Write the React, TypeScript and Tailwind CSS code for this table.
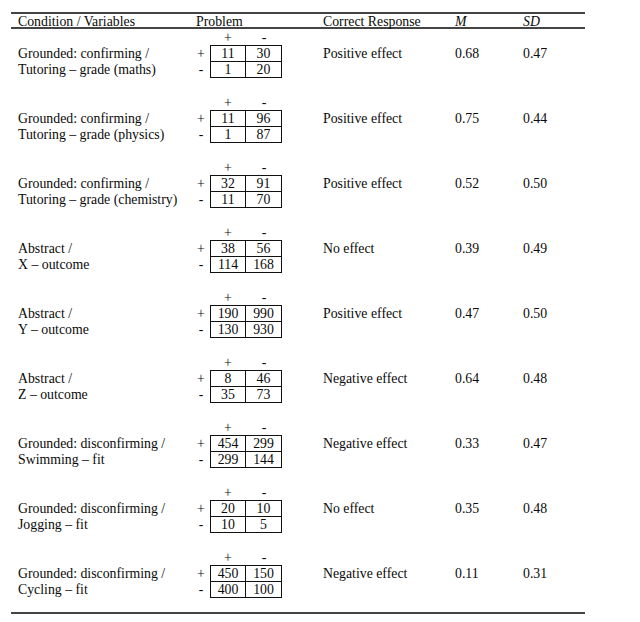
import React from "react";

type Row = {
  l1: string;
  l2: string;
  a: string;
  b: string;
  c: string;
  d: string;
  resp: string;
  m: string;
  sd: string;
};

const rows: Row[] = [
  { l1: "Grounded: confirming /", l2: "Tutoring \u2013 grade (maths)", a: "11", b: "30", c: "1", d: "20", resp: "Positive effect", m: "0.68", sd: "0.47" },
  { l1: "Grounded: confirming /", l2: "Tutoring \u2013 grade (physics)", a: "11", b: "96", c: "1", d: "87", resp: "Positive effect", m: "0.75", sd: "0.44" },
  { l1: "Grounded: confirming /", l2: "Tutoring \u2013 grade (chemistry)", a: "32", b: "91", c: "11", d: "70", resp: "Positive effect", m: "0.52", sd: "0.50" },
  { l1: "Abstract /", l2: "X \u2013 outcome", a: "38", b: "56", c: "114", d: "168", resp: "No effect", m: "0.39", sd: "0.49" },
  { l1: "Abstract /", l2: "Y \u2013 outcome", a: "190", b: "990", c: "130", d: "930", resp: "Positive effect", m: "0.47", sd: "0.50" },
  { l1: "Abstract /", l2: "Z \u2013 outcome", a: "8", b: "46", c: "35", d: "73", resp: "Negative effect", m: "0.64", sd: "0.48" },
  { l1: "Grounded: disconfirming /", l2: "Swimming \u2013 fit", a: "454", b: "299", c: "299", d: "144", resp: "Negative effect", m: "0.33", sd: "0.47" },
  { l1: "Grounded: disconfirming /", l2: "Jogging \u2013 fit", a: "20", b: "10", c: "10", d: "5", resp: "No effect", m: "0.35", sd: "0.48" },
  { l1: "Grounded: disconfirming /", l2: "Cycling \u2013 fit", a: "450", b: "150", c: "400", d: "100", resp: "Negative effect", m: "0.11", sd: "0.31" },
];

function Group({ r, last }: { r: Row; last: boolean }) {
  return (
    <div className={last ? "flex h-[63px]" : "flex h-[65px]"}>
      <div className="w-[185px] pl-[7px] pt-[17px] leading-[16px]">
        <div>{r.l1}</div>
        <div>{r.l2}</div>
      </div>
      <div className="w-[127px] flex flex-col">
        <div className="flex h-[16px] leading-[17px] pl-[14px]">
          <div className="w-[36px] text-center">+</div>
          <div className="w-[36px] text-center">-</div>
        </div>
        <div className="flex">
          <div className="w-[10px] flex flex-col pt-[1px] leading-[16px] text-center">
            <div className="h-[16px]">+</div>
            <div className="h-[16px]">-</div>
          </div>
          <div className="ml-[4px] w-[72px] border border-[#111]">
            <div className="flex h-[16px] border-b border-[#111] leading-[16px]">
              <div className="w-1/2 border-r border-[#111] text-center">{r.a}</div>
              <div className="w-1/2 text-center">{r.b}</div>
            </div>
            <div className="flex h-[15px] leading-[16px]">
              <div className="w-1/2 border-r border-[#111] text-center">{r.c}</div>
              <div className="w-1/2 text-center">{r.d}</div>
            </div>
          </div>
        </div>
      </div>
      <div className="w-[132px] pt-[17px] leading-[16px]">{r.resp}</div>
      <div className="w-[68px] pt-[17px] leading-[16px]">{r.m}</div>
      <div className="w-[62px] pt-[17px] leading-[16px]">{r.sd}</div>
    </div>
  );
}

export default function App() {
  return (
    <div
      className="w-[640px] h-[622px] bg-white text-[#0a0a0a] text-[13.8px] pt-[12px] pl-[11px]"
      style={{ fontFamily: '"Liberation Serif", "Times New Roman", serif' }}
    >
      <div className="w-[574px] border-t-2 border-b-2 border-[#444]">
        <div className="flex h-[15px] leading-[14px] border-b-2 border-[#444] pt-[1px]">
          <div className="w-[185px] pl-[7px]">Condition / Variables</div>
          <div className="w-[127px]">Problem</div>
          <div className="w-[132px]">Correct Response</div>
          <div className="w-[68px] italic">M</div>
          <div className="w-[62px] italic">SD</div>
        </div>
        {rows.map((r, i) => (
          <Group key={i} r={r} last={i === rows.length - 1} />
        ))}
      </div>
    </div>
  );
}
